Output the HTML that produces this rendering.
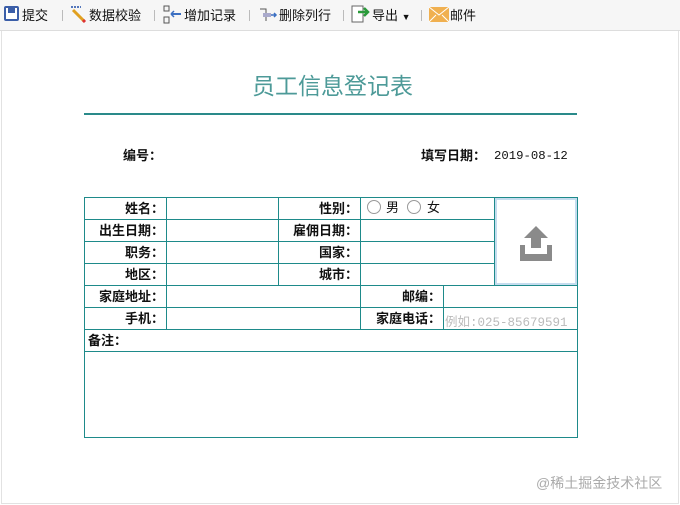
<!DOCTYPE html>
<html><head><meta charset="utf-8"><style>
*{margin:0;padding:0;box-sizing:border-box}
body{width:680px;height:505px;background:#fff;font-family:"Liberation Sans","Noto Sans CJK SC",sans-serif;position:relative;overflow:hidden;color:#111}
.tb{position:absolute;left:0;top:0;width:680px;height:31px;background:#f6f6f6;border-bottom:1px solid #ddd;font-size:13px}
.tb span{position:absolute;top:5px}
.sep{position:absolute;top:10px;width:1px;height:11px;background:#bbb}
.frame{position:absolute;left:1px;top:31px;width:678px;height:473px;border:1px solid #e2e2e2;border-top:none}
.ab{position:absolute}
.l{position:absolute;background:#1e8a8a}
.t{position:absolute;font-size:13px;font-weight:bold;text-align:right;line-height:22px;height:22px;font-family:"Noto Sans CJK SC",sans-serif}
</style></head><body>
<div class="tb">
<div class="ab" style="left:4px;top:6px;width:15px;height:15px;border:2px solid #3b5ea8;border-radius:2px;background:#fff"><div style="position:absolute;left:2px;top:0;width:7px;height:5px;background:#3b5ea8"></div></div>
<span style="left:22px">提交</span><div class="sep" style="left:62px"></div>
<svg class="ab" style="left:69px;top:5px" width="18" height="18"><path d="M2 2h10" stroke="#5577bb" stroke-width="2" stroke-dasharray="2 1"/><path d="M4 5l11 11" stroke="#e0a020" stroke-width="3"/><path d="M14 15l2 2" stroke="#d33" stroke-width="3"/></svg>
<span style="left:89px">数据校验</span><div class="sep" style="left:154px"></div>
<svg class="ab" style="left:163px;top:5px" width="20" height="20"><rect x="1" y="1" width="5" height="5" fill="none" stroke="#555"/><rect x="1" y="12" width="5" height="6" fill="none" stroke="#555"/><path d="M8 9h10" stroke="#3b6fc2" stroke-width="2"/><path d="M8 9l3-3M8 9l3 3" stroke="#3b6fc2" stroke-width="1.5"/></svg>
<span style="left:184px">增加记录</span><div class="sep" style="left:249px"></div>
<svg class="ab" style="left:258px;top:5px" width="20" height="20"><path d="M2 4h6v12" stroke="#555" fill="none"/><rect x="5" y="8" width="8" height="4" fill="#aac"/><path d="M13 10h5M16 8l2 2-2 2" stroke="#3b6fc2" stroke-width="1.5" fill="none"/></svg>
<span style="left:279px">删除列行</span><div class="sep" style="left:343px"></div>
<svg class="ab" style="left:350px;top:4px" width="20" height="20"><path d="M2 2h11v16H2z" fill="#fff" stroke="#666"/><path d="M8 8h10M14 4l4 4-4 4" stroke="#2a9a3a" stroke-width="2.5" fill="none"/></svg>
<span style="left:372px">导出 <span style="position:static;font-size:9px">▼</span></span><div class="sep" style="left:421px"></div>
<svg class="ab" style="left:429px;top:7px" width="20" height="15"><rect width="20" height="15" fill="#f0b050"/><path d="M0 0l10 8 10-8M0 15l7-7M20 15l-7-7" stroke="#fff" fill="none"/></svg>
<span style="left:450px">邮件</span>
</div>
<div class="frame"></div>
<div class="ab" style="left:252px;top:67px;font-size:23px;color:#4d9a98">员工信息登记表</div>
<div class="ab" style="left:84px;top:113px;width:493px;height:2px;background:#2a8a8a"></div>
<div class="ab" style="left:123px;top:145px;font-size:13px;font-weight:bold;font-family:'Noto Sans CJK SC',sans-serif">编号：</div>
<div class="ab" style="left:421px;top:145px;font-size:13px;font-family:'Noto Sans CJK SC',sans-serif"><b>填写日期：</b></div>
<div class="ab" style="left:494px;top:149px;font-family:'Liberation Mono',monospace;font-size:12.3px">2019-08-12</div>

<div class="l" style="left:84px;top:197px;width:494px;height:1px"></div>
<div class="l" style="left:84px;top:219px;width:410px;height:1px"></div>
<div class="l" style="left:84px;top:241px;width:410px;height:1px"></div>
<div class="l" style="left:84px;top:263px;width:410px;height:1px"></div>
<div class="l" style="left:84px;top:285px;width:494px;height:1px"></div>
<div class="l" style="left:84px;top:307px;width:494px;height:1px"></div>
<div class="l" style="left:84px;top:329px;width:494px;height:1px"></div>
<div class="l" style="left:84px;top:351px;width:494px;height:1px"></div>
<div class="l" style="left:84px;top:437px;width:494px;height:1px"></div>
<div class="l" style="left:84px;top:197px;width:1px;height:241px"></div>
<div class="l" style="left:577px;top:197px;width:1px;height:241px"></div>
<div class="l" style="left:166px;top:197px;width:1px;height:132px"></div>
<div class="l" style="left:278px;top:197px;width:1px;height:88px"></div>
<div class="l" style="left:360px;top:197px;width:1px;height:132px"></div>
<div class="l" style="left:494px;top:197px;width:1px;height:88px"></div>
<div class="l" style="left:443px;top:285px;width:1px;height:44px"></div>
<div class="ab" style="left:495px;top:198px;width:82px;height:87px;background:#fff;border:2px solid #c4dcee"></div>
<svg class="ab" style="left:519px;top:225px" width="34" height="38"><path d="M17 1L5 13h7v10h10V13h7z" fill="#8a8a8a"/><path d="M1 20h5v9h22v-9h5v16H1z" fill="#8a8a8a"/></svg>
<div class="t" style="left:84px;top:197px;width:80px">姓名：</div>
<div class="t" style="left:278px;top:197px;width:80px">性别：</div>
<div class="t" style="left:84px;top:219px;width:80px">出生日期：</div>
<div class="t" style="left:278px;top:219px;width:80px">雇佣日期：</div>
<div class="t" style="left:84px;top:241px;width:80px">职务：</div>
<div class="t" style="left:278px;top:241px;width:80px">国家：</div>
<div class="t" style="left:84px;top:263px;width:80px">地区：</div>
<div class="t" style="left:278px;top:263px;width:80px">城市：</div>
<div class="t" style="left:84px;top:285px;width:80px">家庭地址：</div>
<div class="t" style="left:360px;top:285px;width:81px">邮编：</div>
<div class="t" style="left:84px;top:307px;width:80px">手机：</div>
<div class="t" style="left:360px;top:307px;width:81px">家庭电话：</div>
<div class="t" style="left:88px;top:329px;text-align:left">备注：</div>
<div class="ab" style="left:367px;top:200px;width:14px;height:14px;border:1px solid #999;border-radius:50%"></div>
<div class="ab" style="left:386px;top:197px;font-size:13px">男</div>
<div class="ab" style="left:407px;top:200px;width:14px;height:14px;border:1px solid #999;border-radius:50%"></div>
<div class="ab" style="left:427px;top:197px;font-size:13px">女</div>
<div class="ab" style="left:445px;top:311px;font-size:12.5px;color:#bbb;font-family:'Liberation Mono','Noto Sans CJK SC',monospace">例如:025-85679591</div>
<div class="ab" style="left:536px;top:473px;font-size:14px;color:#aaa">@稀土掘金技术社区</div>
</body></html>
